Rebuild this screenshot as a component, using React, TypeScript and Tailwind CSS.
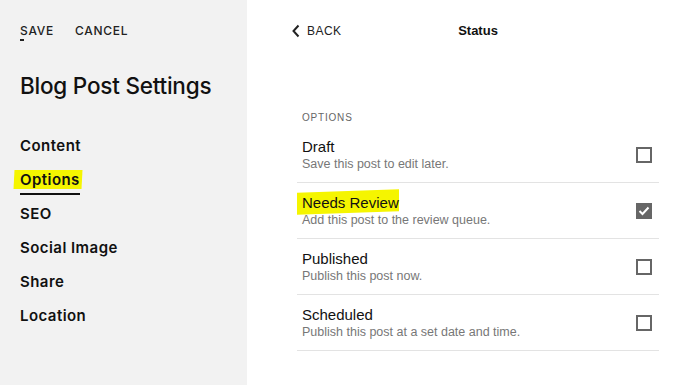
import React from "react";

const rows = [
  { title: "Draft", sub: "Save this post to edit later.", checked: false, hl: false },
  { title: "Needs Review", sub: "Add this post to the review queue.", checked: true, hl: true },
  { title: "Published", sub: "Publish this post now.", checked: false, hl: false },
  { title: "Scheduled", sub: "Publish this post at a set date and time.", checked: false, hl: false },
];

const nav = ["Content", "Options", "SEO", "Social Image", "Share", "Location"];

export default function App() {
  return (
    <div className="flex w-[682px] h-[385px] overflow-hidden bg-white" style={{ fontFamily: "Inter, 'Liberation Sans', sans-serif" }}>
      <div className="w-[247px] h-full bg-[#f2f2f2] pl-5 pt-[24px]">
        <div className="flex gap-[21px] text-[12px] leading-[14px] tracking-[0.06em] font-medium text-[#222]">
          <span className="relative">
            SAVE
            <span className="absolute left-0 top-[15px] w-[4px] h-[2px] bg-[#222]" />
          </span>
          <span>CANCEL</span>
        </div>
        <div className="mt-[35px] text-[22.5px] leading-[26px] font-medium text-[#111] tracking-[-0.01em]">Blog Post Settings</div>
        <div className="mt-[37px] flex flex-col">
          {nav.map((n) => (
            <div key={n} className="h-[34px] flex items-start">
              {n === "Options" ? (
                <span className="relative inline-block border-b-2 border-[#111] pb-[3px] text-[15px] leading-[20px] font-semibold tracking-[0.03em] text-[#111]">
                  <span className="absolute -left-[6px] -right-[2px] top-[0px] bottom-[4px] bg-[#f5f500] -skew-x-3" />
                  <span className="relative">{n}</span>
                </span>
              ) : (
                <span className="text-[15px] leading-[20px] font-semibold tracking-[0.03em] text-[#111]">{n}</span>
              )}
            </div>
          ))}
        </div>
      </div>
      <div className="flex-1 pl-[50px] pt-[23px]">
        <div className="w-[362px]">
          <div className="relative h-[16px] flex items-center justify-center">
            <div className="absolute -left-[6px] top-0 flex items-center gap-[6px] text-[12px] leading-[16px] tracking-[0.04em] font-medium text-[#222]" style={{ fontFamily: "'Liberation Sans', Arial, sans-serif" }}>
              <svg width="10" height="14" viewBox="0 0 10 14" className="-mt-[1px]">
                <path d="M7.5 1.5 L2.5 7 L7.5 12.5" fill="none" stroke="#222" strokeWidth="2" />
              </svg>
              BACK
            </div>
            <span className="text-[13px] leading-[16px] font-semibold text-[#111]" style={{ fontFamily: "'Liberation Sans', Arial, sans-serif" }}>Status</span>
          </div>
          <div className="mt-[73px] pl-[5px] text-[10px] leading-[12px] tracking-[0.08em] font-medium text-[#666]" style={{ fontFamily: "'Liberation Sans', Arial, sans-serif" }}>OPTIONS</div>
          <div className="mt-[3px]" style={{ fontFamily: "'Liberation Sans', Arial, sans-serif" }}>
            {rows.map((r) => (
              <div key={r.title} className="h-[56px] border-b border-[#e3e3e3] flex items-center justify-between pl-[5px] pr-[7px]">
                <div className="flex flex-col pt-[1px]">
                  <span className="relative inline-block self-start text-[15px] leading-[18px] text-[#111]">
                    {r.hl && <span className="absolute -left-[5px] right-[0px] -top-[3px] -bottom-[1px] bg-[#f5f500] -skew-y-2" />}
                    <span className="relative">{r.title}</span>
                  </span>
                  <span className="mt-[1px] text-[12.5px] leading-[15px] text-[#777]">{r.sub}</span>
                </div>
                {r.checked ? (
                  <div className="w-[16px] h-[16px] bg-[#666] flex items-center justify-center">
                    <svg width="12" height="10" viewBox="0 0 12 10">
                      <path d="M1.5 5 L4.5 8 L10.5 1.5" fill="none" stroke="#fff" strokeWidth="2" />
                    </svg>
                  </div>
                ) : (
                  <div className="w-[16px] h-[16px] border-2 border-[#666]" />
                )}
              </div>
            ))}
          </div>
        </div>
      </div>
    </div>
  );
}
